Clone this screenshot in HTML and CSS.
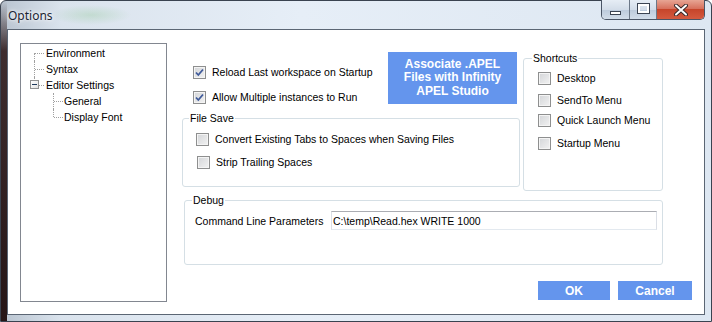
FILE: index.html
```html
<!DOCTYPE html>
<html>
<head>
    <title>Options</title>
    <link rel="stylesheet" href="styles.css">
</head>
<body>
    <div class="window">
        <div class="titlebar">
            <div class="title">Options</div>
            <div class="caption-buttons">
                <div class="cap-btn cap-min"><span class="min-glyph"></span></div>
                <div class="cap-btn cap-max"><span class="max-glyph"></span></div>
                <div class="cap-btn cap-close">
                    <svg width="14" height="12" viewBox="0 0 14 12">
                        <path d="M2 1.5 L12 10.5 M12 1.5 L2 10.5" stroke="#3a2a2a" stroke-width="4" stroke-linecap="round"/>
                        <path d="M2 1.5 L12 10.5 M12 1.5 L2 10.5" stroke="#ffffff" stroke-width="2" stroke-linecap="round"/>
                    </svg>
                </div>
            </div>
        </div>

        <div class="client">
            <div class="tree">
                <div class="node root first">Environment</div>
                <div class="node root">Syntax</div>
                <div class="node root last"><span class="expander"></span>Editor Settings</div>
                <div class="node child first">General</div>
                <div class="node child last">Display Font</div>
            </div>

            <div class="panel">
                <div class="top-section">
                    <div class="left-col">
                        <div class="upper">
                            <div class="options">
                                <div class="checkrow">
                                    <span class="check"><svg width="11" height="11" viewBox="0 0 11 11"><path d="M2 5.5 L4.3 8 L9 2.5" fill="none" stroke="#3f5a9a" stroke-width="1.8"/></svg></span>
                                    Reload Last workspace on Startup
                                </div>
                                <div class="checkrow">
                                    <span class="check"><svg width="11" height="11" viewBox="0 0 11 11"><path d="M2 5.5 L4.3 8 L9 2.5" fill="none" stroke="#3f5a9a" stroke-width="1.8"/></svg></span>
                                    Allow Multiple instances to Run
                                </div>
                            </div>
                            <button class="blue-btn assoc">Associate .APEL<br>Files with Infinity<br>APEL Studio</button>
                        </div>

                        <fieldset class="group file-save">
                            <legend>File Save</legend>
                            <div class="checkrow"><span class="check"></span>Convert Existing Tabs to Spaces when Saving Files</div>
                            <div class="checkrow strip"><span class="check"></span>Strip Trailing Spaces</div>
                        </fieldset>
                    </div>

                    <fieldset class="group shortcuts">
                        <legend>Shortcuts</legend>
                        <div class="checkrow"><span class="check"></span>Desktop</div>
                        <div class="checkrow"><span class="check"></span>SendTo Menu</div>
                        <div class="checkrow"><span class="check"></span>Quick Launch Menu</div>
                        <div class="checkrow"><span class="check"></span>Startup Menu</div>
                    </fieldset>
                </div>

                <fieldset class="group debug">
                    <legend>Debug</legend>
                    <div class="param-row">
                        <span>Command Line Parameters</span>
                        <input type="text" class="textbox" value="C:\temp\Read.hex WRITE 1000">
                    </div>
                </fieldset>

                <div class="actions">
                    <button class="blue-btn ok">OK</button>
                    <button class="blue-btn cancel">Cancel</button>
                </div>
            </div>
        </div>
    </div>
</body>
</html>
```

FILE: styles.css
```css
body {
    margin: 0;
    font-family: "Liberation Sans", Arial, sans-serif;
    font-size: 10.5px;
    color: #000000;
    background-color: #ffffff;
}
.window {
    width: 712px;
    height: 322px;
    box-sizing: border-box;
    border: 1px solid #3a4350;
    border-radius: 6px 6px 0 0;
    padding: 0 6px 6px 6px;
    display: flex;
    flex-direction: column;
    background:
        linear-gradient(to bottom, rgba(40, 18, 18, 0) 0px, rgba(40, 18, 18, 0.85) 50px, rgba(30, 12, 12, 0.95) 100%) 0 0 / 6px 100% no-repeat,
        radial-gradient(ellipse 40px 10px at 90px 14px, rgba(120, 190, 120, 0.25), rgba(120, 190, 120, 0) 100%),
        linear-gradient(to right, #b9c4d0 0px, #dae3ed 60px, #e6eef7 300px, #dde7f2 100%);
}
.titlebar {
    height: 28px;
    display: flex;
    justify-content: space-between;
    align-items: flex-start;
    padding-left: 1px;
}
.title {
    font-family: "Noto Sans", "Open Sans", sans-serif;
    font-size: 12px;
    color: #1b2533;
    margin-top: 6px;
    text-shadow: 0 0 6px #ffffff, 0 0 3px #ffffff;
}
.caption-buttons {
    display: flex;
    margin-top: -1px;
    border: 1px solid #4a5566;
    border-top: none;
    border-radius: 0 0 5px 5px;
    overflow: hidden;
    height: 19px;
}
.cap-btn {
    display: flex;
    align-items: center;
    justify-content: center;
    height: 19px;
    background: linear-gradient(to bottom, #e6edf5 0%, #d3dde9 50%, #bccadb 51%, #d2dde9 100%);
}
.cap-min {
    width: 27px;
    border-right: 1px solid #6c7888;
}
.cap-max {
    width: 26px;
    border-right: 1px solid #6c7888;
}
.cap-close {
    width: 47px;
    background: linear-gradient(to bottom, #e7a594 0%, #d7715d 45%, #c6452b 50%, #d45a3f 100%);
}
.min-glyph {
    width: 9px;
    height: 2px;
    margin-top: 6px;
    background-color: #ffffff;
    border: 1px solid #3b4452;
}
.max-glyph {
    width: 7px;
    height: 5px;
    background-color: transparent;
    border: 2px solid #ffffff;
    outline: 1px solid #3b4452;
    margin-top: -2px;
}
.client {
    flex: 1;
    display: flex;
    background-color: #ffffff;
    border: 1px solid #5b6674;
    padding: 13px 12px 11px 12px;
}
.tree {
    width: 147px;
    height: 259px;
    box-sizing: border-box;
    border: 1px solid #828790;
    padding-top: 1px;
    flex-shrink: 0;
}
.node {
    position: relative;
    height: 16px;
    line-height: 16px;
    white-space: nowrap;
}
.node.root {
    padding-left: 25px;
}
.node.child {
    padding-left: 43px;
}
.node::before {
    content: "";
    position: absolute;
    top: 8px;
    width: 9px;
    border-top: 1px dotted #a0a0a0;
}
.node::after {
    content: "";
    position: absolute;
    top: 0;
    height: 16px;
    border-left: 1px dotted #a0a0a0;
}
.node.root::before {
    left: 14px;
}
.node.root::after {
    left: 13px;
}
.node.child::before {
    left: 33px;
}
.node.child::after {
    left: 32px;
}
.node.first::after {
    top: 8px;
    height: 8px;
}
.node.child.first::after {
    top: 0;
    height: 16px;
}
.node.last::after {
    height: 8px;
}
.expander {
    position: absolute;
    left: 9px;
    top: 3px;
    width: 7px;
    height: 7px;
    border: 1px solid #919191;
    background: linear-gradient(135deg, #ffffff 0%, #e2e2e2 100%);
    z-index: 1;
}
.expander::after {
    content: "";
    position: absolute;
    left: 1px;
    top: 3px;
    width: 5px;
    height: 1px;
    background-color: #1e395b;
}
.panel {
    flex: 1;
    margin-left: 15px;
    display: flex;
    flex-direction: column;
}
.top-section {
    display: flex;
    align-items: flex-start;
    gap: 3px;
}
.left-col {
    width: 338px;
}
.upper {
    display: flex;
    justify-content: space-between;
    align-items: flex-start;
    padding: 9px 3px 0 11px;
}
.options {
    margin-top: 12px;
    display: flex;
    flex-direction: column;
    gap: 9px;
}
.checkrow {
    display: flex;
    align-items: center;
    height: 16px;
    white-space: nowrap;
}
.check {
    width: 11px;
    height: 11px;
    border: 1px solid #8e8f8f;
    margin-right: 6px;
    background: linear-gradient(135deg, #d3d5d8 0%, #f2f2f2 100%);
    box-shadow: inset 0 0 0 1px #f4f4f4;
    display: flex;
    flex-shrink: 0;
}
.blue-btn {
    background-color: #6495ed;
    color: #ffffff;
    border: none;
    font-family: "Liberation Sans", Arial, sans-serif;
    font-weight: bold;
    font-size: 12px;
    padding: 0;
    cursor: pointer;
}
.assoc {
    width: 129px;
    height: 52px;
    line-height: 13.5px;
}
.group {
    margin: 0;
    padding: 0;
    border: 1px solid #d5dfe5;
    border-radius: 3px;
    box-sizing: border-box;
}
.group legend {
    padding: 0 1px;
    line-height: 14px;
}
.file-save {
    margin-top: 6px;
    height: 76px;
}
.file-save legend {
    margin-left: 6px;
}
.file-save .checkrow {
    margin-left: 13px;
    margin-top: 6px;
}
.file-save .checkrow.strip {
    margin-left: 14px;
    margin-top: 7px;
}
.shortcuts {
    margin-top: 8px;
    width: 140px;
    height: 140px;
}
.shortcuts legend {
    margin-left: 8px;
}
.shortcuts .checkrow {
    margin-left: 14px;
}
.shortcuts .checkrow:nth-of-type(1) {
    margin-top: 5px;
}
.shortcuts .checkrow:nth-of-type(2) {
    margin-top: 6px;
}
.shortcuts .checkrow:nth-of-type(3) {
    margin-top: 4px;
}
.shortcuts .checkrow:nth-of-type(4) {
    margin-top: 7px;
}
.debug {
    margin: 2px 0 0 2px;
    width: 479px;
    height: 72px;
}
.debug legend {
    margin-left: 7px;
}
.param-row {
    display: flex;
    justify-content: space-between;
    align-items: center;
    padding: 0 5px 0 10px;
    margin-top: 4px;
}
.textbox {
    width: 326px;
    height: 19px;
    box-sizing: border-box;
    border: 1px solid #abadb3;
    border-left-color: #dbdfe6;
    border-right-color: #dbdfe6;
    border-bottom-color: #e3e9ef;
    padding: 0 0 0 1px;
    font-family: "Liberation Sans", Arial, sans-serif;
    font-size: 10.5px;
    color: #000000;
}
.actions {
    margin-top: 16px;
    display: flex;
    justify-content: flex-end;
    gap: 8px;
}
.ok {
    width: 72px;
    height: 19px;
}
.cancel {
    width: 74px;
    height: 19px;
}
```
